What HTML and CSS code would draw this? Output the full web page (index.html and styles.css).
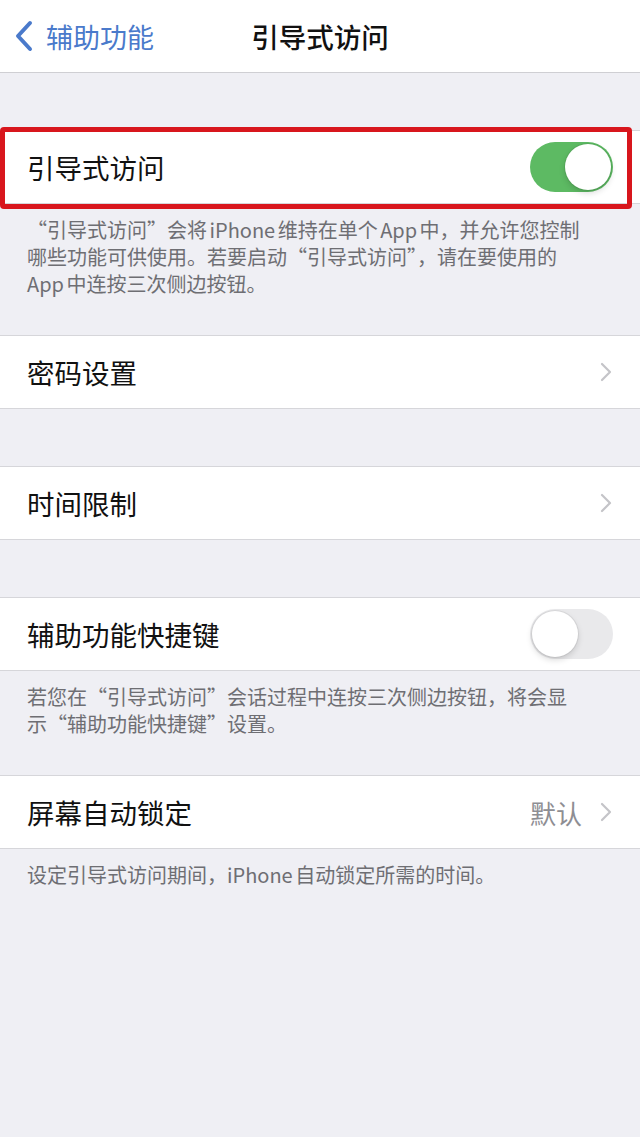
FILE: index.html
```html
<!DOCTYPE html>
<html lang="zh-CN">
    <head>
        <meta charset="utf-8">
        <title>引导式访问</title>
        <link rel="stylesheet" href="styles.css">
    </head>
    <body>
        <header class="navbar">
            <a class="back" href="#">
                <svg class="back-icon" viewBox="0 0 20 32" width="20" height="32">
                    <path d="M16 3 L4 16 L16 29" fill="none" stroke="currentColor" stroke-width="4" stroke-linecap="round" stroke-linejoin="round"/>
                </svg>
                <span>辅助功能</span>
            </a>
            <h1 class="title">引导式访问</h1>
            <div></div>
        </header>

        <main class="settings">
            <section class="group">
                <div class="cell highlighted">
                    <span class="label">引导式访问</span>
                    <span class="switch on"><span class="knob"></span></span>
                </div>
                <p class="footnote">“引导式访问”会将 iPhone 维持在单个 App 中，并允许您控制哪些功能可供使用。若要启动“引导式访问”，请在要使用的 App 中连按三次侧边按钮。</p>
            </section>

            <section class="group">
                <div class="cell">
                    <span class="label">密码设置</span>
                    <svg class="chevron" viewBox="0 0 12 20" width="12" height="20">
                        <path d="M2 2 L10 10 L2 18" fill="none" stroke="currentColor" stroke-width="2.2" stroke-linecap="round" stroke-linejoin="round"/>
                    </svg>
                </div>
            </section>

            <section class="group">
                <div class="cell">
                    <span class="label">时间限制</span>
                    <svg class="chevron" viewBox="0 0 12 20" width="12" height="20">
                        <path d="M2 2 L10 10 L2 18" fill="none" stroke="currentColor" stroke-width="2.2" stroke-linecap="round" stroke-linejoin="round"/>
                    </svg>
                </div>
            </section>

            <section class="group">
                <div class="cell">
                    <span class="label">辅助功能快捷键</span>
                    <span class="switch"><span class="knob"></span></span>
                </div>
                <p class="footnote">若您在“引导式访问”会话过程中连按三次侧边按钮，将会显示“辅助功能快捷键”设置。</p>
            </section>

            <section class="group">
                <div class="cell">
                    <span class="label">屏幕自动锁定</span>
                    <span class="value">默认</span>
                    <svg class="chevron" viewBox="0 0 12 20" width="12" height="20">
                        <path d="M2 2 L10 10 L2 18" fill="none" stroke="currentColor" stroke-width="2.2" stroke-linecap="round" stroke-linejoin="round"/>
                    </svg>
                </div>
                <p class="footnote">设定引导式访问期间，iPhone 自动锁定所需的时间。</p>
            </section>
        </main>
    </body>
</html>
```

FILE: styles.css
```css
body {
    margin: 0;
    min-height: 100vh;
    background-color: #efeff4;
    font-family: "Noto Sans CJK SC", sans-serif;
    color: #111;
}

.navbar {
    display: grid;
    grid-template-columns: 1fr auto 1fr;
    align-items: center;
    height: 72px;
    background-color: #fff;
    border-bottom: 1px solid #cfcfd3;
}

.back {
    display: flex;
    align-items: center;
    gap: 12px;
    padding-left: 14px;
    color: #4a7acb;
    text-decoration: none;
    font-size: 27px;
}

.back-icon {
    flex: none;
}

.title {
    margin: 0;
    font-size: 27.5px;
    font-weight: 500;
    color: #111;
}

.settings {
    padding-top: 57px;
}

.group + .group {
    margin-top: 57px;
}

.group:has(.footnote) + .group {
    margin-top: 0;
}

.cell {
    position: relative;
    display: flex;
    align-items: center;
    height: 72px;
    padding: 0 28px 0 27px;
    background-color: #fff;
    border-top: 1px solid #d6d6da;
    border-bottom: 1px solid #d6d6da;
}

/* red annotation frame around the first row */
.cell.highlighted::after {
    content: "";
    position: absolute;
    left: 0;
    right: 8px;
    top: -4px;
    bottom: -6px;
    border: 5px solid #d8161d;
    border-radius: 4px;
}

.label {
    flex: 1;
    font-size: 27.5px;
}

.value {
    margin-right: 18px;
    font-size: 26px;
    color: #8e8e93;
}

.chevron {
    color: #c4c4c8;
}

.switch {
    position: relative;
    width: 83px;
    height: 50px;
    margin-right: -1px;
    border-radius: 25px;
    background-color: #e9e9eb;
}

.switch .knob {
    position: absolute;
    top: 2px;
    left: 2px;
    width: 46px;
    height: 46px;
    border-radius: 50%;
    background-color: #fff;
    box-shadow: 0 0 0 1px rgba(0, 0, 0, 0.06), 0 3px 6px rgba(0, 0, 0, 0.15);
}

.switch.on {
    background-color: #5dba63;
}

.switch.on .knob {
    left: auto;
    right: 2px;
}

.footnote {
    margin: 0;
    padding: 12px 57px 38px 27px;
    font-size: 20px;
    line-height: 27px;
    word-spacing: -2px;
    color: #6e6e73;
}
```
